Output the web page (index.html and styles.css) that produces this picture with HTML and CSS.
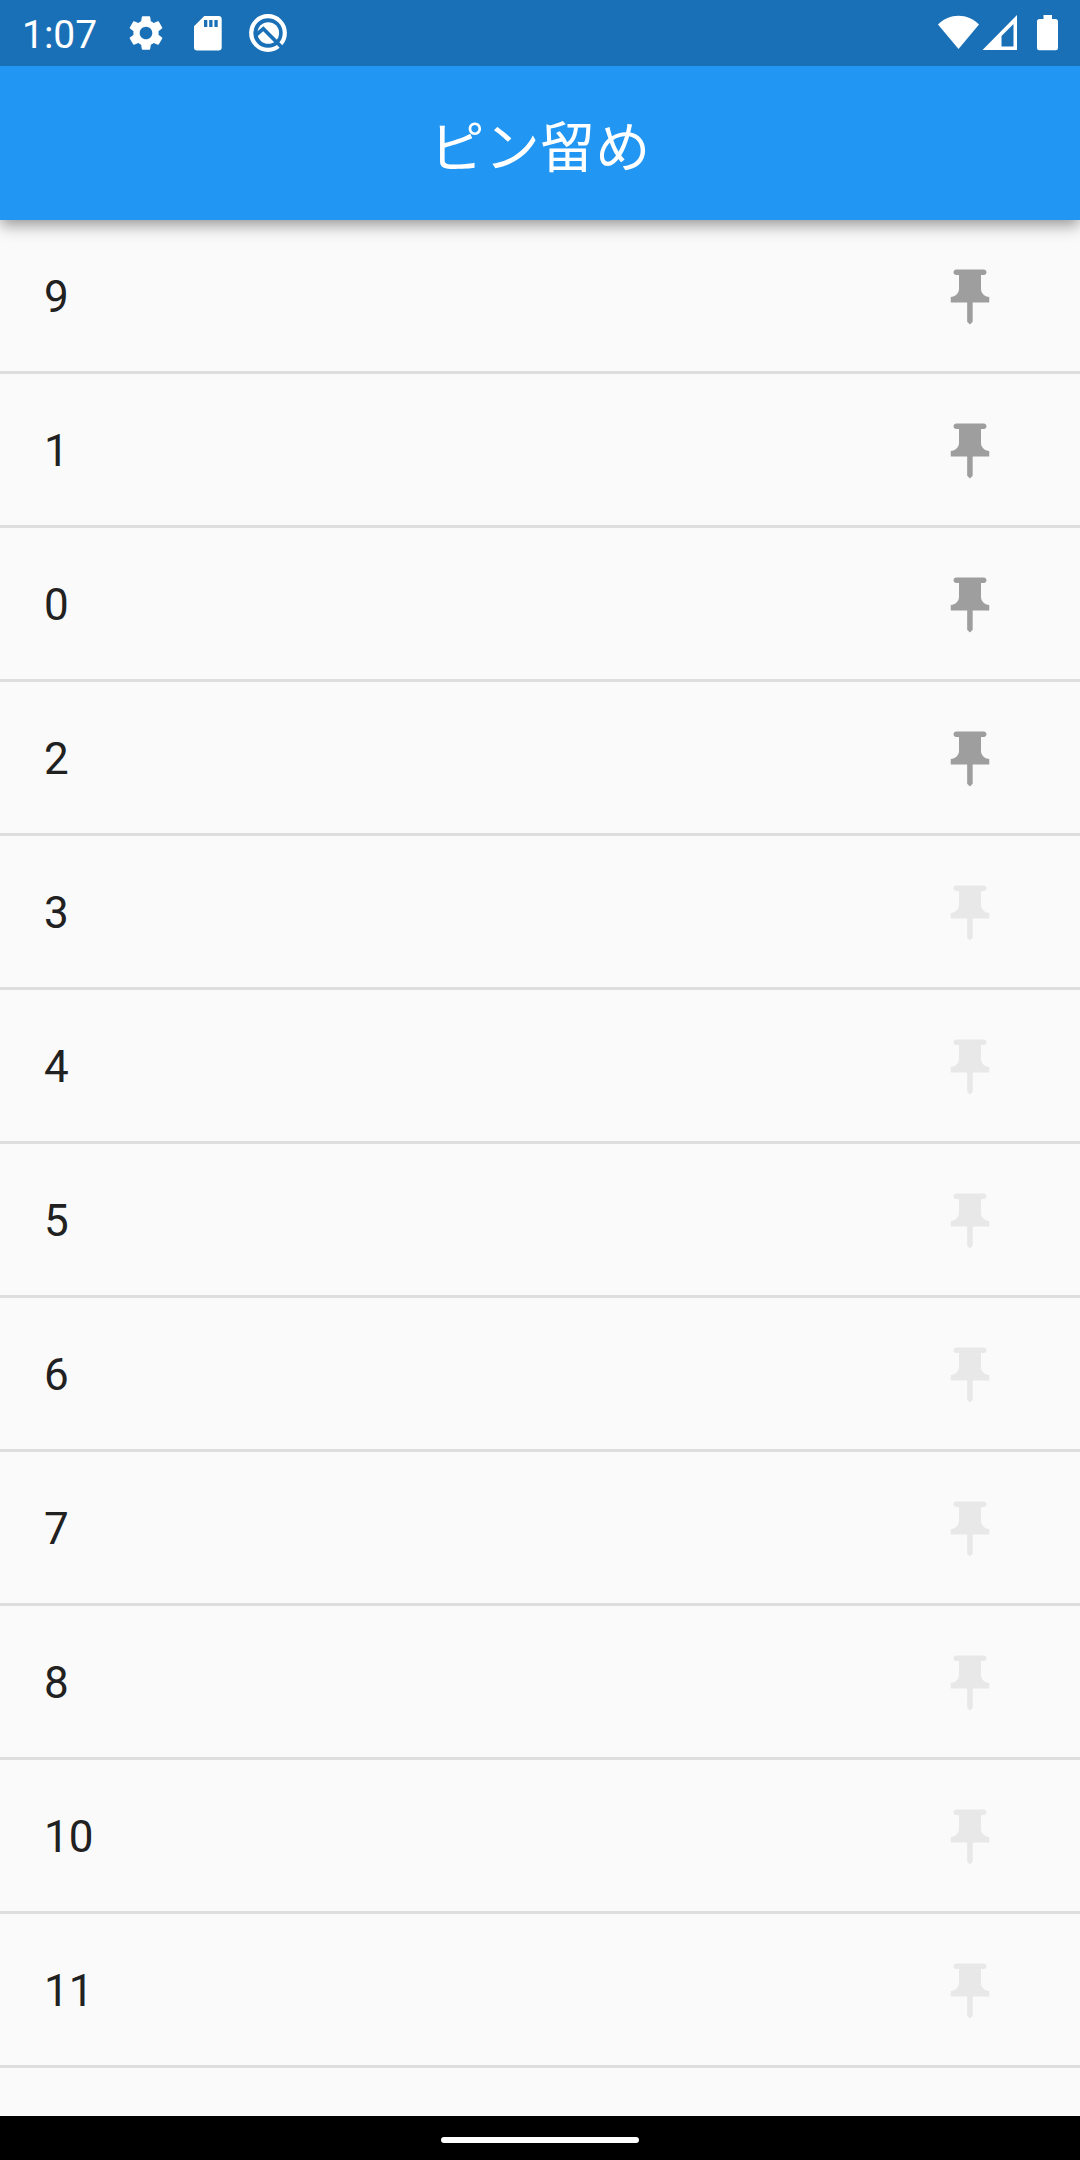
FILE: index.html
```
<!DOCTYPE html>
<html lang="ja">
<head>
<meta charset="utf-8">
<title>ピン留め</title>
<link rel="stylesheet" href="styles.css">
<script src="list.js" defer></script>
</head>
<body>
<header class="top">
  <div class="status">
    <span class="clock">1:07</span>
    <svg class="gear" viewBox="0 0 24 24"><path d="M19.14 12.94c.04-.3.06-.61.06-.94 0-.32-.02-.64-.07-.94l2.03-1.58c.18-.14.23-.41.12-.61l-1.92-3.32c-.12-.22-.37-.29-.59-.22l-2.39.96c-.5-.38-1.03-.7-1.62-.94l-.36-2.54c-.04-.24-.24-.41-.48-.41h-3.84c-.24 0-.43.17-.47.41l-.36 2.54c-.59.24-1.13.57-1.62.94l-2.39-.96c-.22-.08-.47 0-.59.22L2.74 8.87c-.12.21-.08.47.12.61l2.03 1.58c-.05.3-.09.63-.09.94s.02.64.07.94l-2.03 1.58c-.18.14-.23.41-.12.61l1.92 3.32c.12.22.37.29.59.22l2.39-.96c.5.38 1.03.7 1.62.94l.36 2.54c.05.24.24.41.48.41h3.84c.24 0 .44-.17.47-.41l.36-2.54c.59-.24 1.13-.56 1.62-.94l2.39.96c.22.08.47 0 .59-.22l1.92-3.32c.12-.22.07-.47-.12-.61l-2.01-1.58zM12 15.6c-1.98 0-3.6-1.62-3.6-3.6s1.620-3.6 3.6-3.6 3.6 1.62 3.6 3.6-1.62 3.6-3.6 3.6z"/></svg>
    <svg class="card" viewBox="0 0 28 35"><path fill-rule="evenodd" d="M10.300 0H24.500a3.200 3.200 0 0 1 3.200 3.200V31.300a3.200 3.200 0 0 1-3.200 3.200H3.200A3.200 3.200 0 0 1 0 31.300V10.300zM10 4v7h3.300V4zM15.200 4v7h3.300V4zM20.400 4v7h3.300V4z"/></svg>
    <svg class="quick" viewBox="0 0 38 38"><circle class="ring" cx="19" cy="19" r="16.800"/><circle cx="19.300" cy="19" r="10.800"/><path class="slash" d="M6.500 21.500 14.300 14.700 33 33.500"/></svg>
    <svg class="signals" viewBox="0 0 120 36"><path d="M0 9.500C11-2.300 30-2.300 41 9.500L20.500 34z"/><path fill-rule="evenodd" d="M79 0V35H44.500zM75.500 9 63.500 21V31.500H75.500z"/><path d="M105.500 0h8.500v4h3.500a2.500 2.500 0 0 1 2.500 2.500V33a2.300 2.300 0 0 1-2.300 2.300H101.300A2.300 2.300 0 0 1 99 33V6.500A2.500 2.500 0 0 1 101.500 4h4z"/></svg>
  </div>
  <h1 class="title">ピン留め</h1>
</header>
<main class="list" id="list"></main>
<footer class="nav"><div class="handle"></div></footer>
</body>
</html>
```
FILE: list.js
```
const pinned = ["9", "1", "0", "2"];
const others = ["3", "4", "5", "6", "7", "8", "10", "11"];
const pin = '<svg class="pin" viewBox="0 0 24 24"><path d="M16 9V4h1c.55 0 1-.45 1-1s-.45-1-1-1H7c-.55 0-1 .45-1 1s.45 1 1 1h1v5c0 1.660-1.340 3-3 3v2h5.970v7l1 1 1-1v-7H19v-2c-1.660 0-3-1.340-3-3z"/></svg>';

function row(label, isPinned) {
  return `<div class="row${isPinned ? " pinned" : ""}"><span class="label">${label}</span>${pin}</div>`;
}

document.getElementById("list").innerHTML =
  pinned.map((n) => row(n, true)).join("") + others.map((n) => row(n, false)).join("");
```
FILE: styles.css
```
* { box-sizing: border-box; }
body {
  margin: 0;
  width: 1080px;
  height: 2160px;
  display: flex;
  flex-direction: column;
  overflow: hidden;
  background: #fafafa;
  color: #212121;
  font-family: Roboto, "Noto Sans CJK JP", sans-serif;
}
.top {
  flex: none;
  height: 220px;
  background: #2196f3;
  color: #fff;
  position: relative;
  box-shadow: 0 5px 11px -2px rgba(0,0,0,.2), 0 9px 14px rgba(0,0,0,.14), 0 2px 20px rgba(0,0,0,.12);
}
.status {
  height: 66px;
  display: flex;
  align-items: flex-start;
  padding: 0 22px;
  background: #1a70b7;
}
.status svg { fill: #fff; flex: none; }
.clock { width: 104px; font-size: 39px; line-height: 46px; padding-top: 12px; }
.gear { width: 42px; height: 42px; margin: 12px 0 0 -1px; }
.card { width: 28px; height: 35px; margin: 16px 0 0 27px; }
.quick { width: 38px; height: 38px; margin: 14px 0 0 27px; }
.ring { fill: none; stroke: #fff; stroke-width: 4.2px; }
.slash { fill: none; stroke: #1a70b7; stroke-width: 3.7px; }
.signals { width: 120px; height: 36px; margin: 15px 0 0 auto; }
.title {
  margin: 0;
  height: 154px;
  line-height: 164px;
  text-align: center;
  font-size: 55px;
  font-weight: 400;
  letter-spacing: .2px;
}
.list { flex: 1; min-height: 0; }
.row {
  height: 154px;
  display: flex;
  align-items: flex-start;
  justify-content: space-between;
  padding: 0 77px 0 44px;
  border-bottom: 3px solid #dedede;
}
.label { font-size: 44px; line-height: 52px; padding-top: 51px; }
.pin { width: 66px; height: 66px; margin-top: 43.5px; fill: #e8e8e8; }
.pinned .pin { fill: #9e9e9e; }
.nav {
  flex: none;
  height: 44px;
  display: flex;
  justify-content: center;
  padding-top: 21px;
  background: #000;
}
.handle { width: 198px; height: 6px; border-radius: 3px; background: #fff; }
```
